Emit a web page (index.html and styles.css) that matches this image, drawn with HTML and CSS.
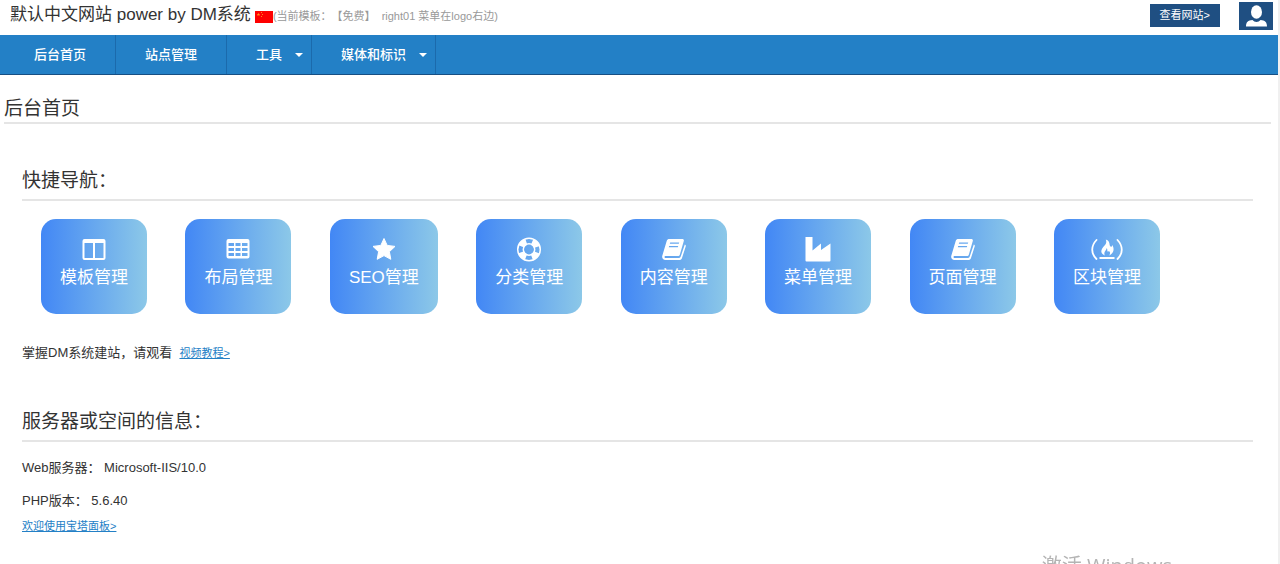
FILE: index.html
```html
<!DOCTYPE html>
<html lang="zh-CN">
<head>
<meta charset="utf-8">
<title>后台首页</title>
<link rel="stylesheet" href="styles.css">
</head>
<body>
<header class="topbar">
  <div class="site">
    <span class="site-name">默认中文网站 power by DM系统</span>
    <svg class="flag" viewBox="0 0 18 12" aria-hidden="true"><path fill="#fe0000" d="M0 0h18v12H0z"/><path fill="#ff9a1f" d="M3.400 1.800l.5 1.200h1.300l-1 .8.400 1.200-1.200-.7-1.100.7.400-1.200-1-.8H3z"/><path fill="#ff8a1f" d="M6 1h1v1H6zM7 3h1v1H7zM6 5h1v1H6z"/></svg>
    <span class="template">(当前模板：【免费】&nbsp; right01 菜单在logo右边)</span>
  </div>
  <div class="actions">
    <a class="view-site" href="#">查看网站&gt;</a>
    <button class="user" type="button" aria-label="用户">
      <svg viewBox="0 0 34 28" aria-hidden="true"><ellipse cx="17.500" cy="10" rx="5.500" ry="6.800" fill="#fff"/><path fill="#fff" d="M7 24.500c0-4.500 2-6 6.500-6.500 2 2.500 6 2.500 8 0 4.500.5 6.500 2 6.500 6.500z"/></svg>
    </button>
  </div>
</header>
<nav class="nav">
  <a class="nav-item nav-first" href="#">后台首页</a>
  <a class="nav-item" href="#">站点管理</a>
  <a class="nav-item nav-drop" href="#">工具<span class="caret"></span></a>
  <a class="nav-item nav-drop" href="#">媒体和标识<span class="caret"></span></a>
</nav>
<main class="main">
  <h1 class="page-title">后台首页</h1>
  <section class="section">
    <h2 class="section-title">快捷导航：</h2>
    <div class="cards">
      <a class="card" href="#"><svg class="icon" viewBox="0 0 32 24" aria-hidden="true"><path fill="#fff" fill-rule="evenodd" d="M6.500 2h19a2 2 0 0 1 2 2v17a2 2 0 0 1-2 2h-19a2 2 0 0 1-2-2V4a2 2 0 0 1 2-2zM6.500 6v15H15V6zM17 6v15h8.500V6z"/></svg><span>模板管理</span></a>
      <a class="card" href="#"><svg class="icon" viewBox="0 0 32 24" aria-hidden="true"><path fill="#fff" fill-rule="evenodd" d="M6.500 2h19a2 2 0 0 1 2 2v15.500a2 2 0 0 1-2 2h-19a2 2 0 0 1-2-2V4a2 2 0 0 1 2-2zM6.500 6v3H12V6zM13.500 6v3h5V6zM20 6v3h5.500V6zM6.500 11v3H12v-3zM13.500 11v3h5v-3zM20 11v3h5.500v-3zM6.500 16v3H12v-3zM13.500 16v3h5v-3zM20 16v3h5.500v-3z"/></svg><span>布局管理</span></a>
      <a class="card" href="#"><svg class="icon" viewBox="0 0 32 24" aria-hidden="true"><path fill="#fff" stroke="#fff" stroke-width="1" stroke-linejoin="round" d="M16 1.500l3.200 6.900 7.800 1-5.600 5.300 1.400 7.600-6.800-3.700-6.800 3.700 1.400-7.600L5 9.400l7.800-1z"/></svg><span>SEO管理</span></a>
      <a class="card" href="#"><svg class="icon" viewBox="0 0 32 24" aria-hidden="true"><circle cx="16" cy="12.500" r="11.300" fill="none" stroke="#fff" stroke-width="1.500"/><circle cx="16" cy="12.500" r="8.200" fill="none" stroke="#fff" stroke-width="6.200" stroke-dasharray="6.900 5.980" stroke-dashoffset="-2.990"/><circle cx="16" cy="12.500" r="5.700" fill="none" stroke="#fff" stroke-width="1.500"/></svg><span>分类管理</span></a>
      <a class="card" href="#"><svg class="icon" viewBox="0 0 32 24" aria-hidden="true"><path fill="#fff" fill-rule="evenodd" d="M11.500 2h12.800c1.200 0 1.800.9 1.500 2l-3.900 13.500c-.3 1-1 1.500-2 1.500H7.400c-1.200 0-1.200 1.900.2 1.900h13.500c.8 0 1.300-.5 1.600-1.300L26.800 7.500c1 .3 1.200 1.100.9 2.100L24 21c-.5 1.400-1.400 2-2.800 2H7.500c-2.500 0-3.800-2-3.200-4.200L8.700 4c.5-1.400 1.300-2 2.800-2zM12.200 5.500l-.4 1.300h9l.4-1.300zM11.200 9l-.4 1.300h9l.4-1.300z"/></svg><span>内容管理</span></a>
      <a class="card" href="#"><svg class="icon" viewBox="0 0 32 24" aria-hidden="true"><path fill="#fff" d="M4 0h6.500v13.500l8.500-7v6.500l9.500-6.500V23.500a1 1 0 0 1-1 1h-23a1 1 0 0 1-1-1V0z"/></svg><span>菜单管理</span></a>
      <a class="card" href="#"><svg class="icon" viewBox="0 0 32 24" aria-hidden="true"><path fill="#fff" fill-rule="evenodd" d="M11.500 2h12.800c1.200 0 1.800.9 1.500 2l-3.900 13.500c-.3 1-1 1.500-2 1.500H7.400c-1.200 0-1.200 1.900.2 1.900h13.500c.8 0 1.300-.5 1.600-1.300L26.800 7.500c1 .3 1.200 1.100.9 2.100L24 21c-.5 1.400-1.400 2-2.800 2H7.500c-2.500 0-3.800-2-3.200-4.200L8.700 4c.5-1.400 1.300-2 2.800-2zM12.200 5.500l-.4 1.300h9l.4-1.300zM11.200 9l-.4 1.300h9l.4-1.300z"/></svg><span>页面管理</span></a>
      <a class="card" href="#"><svg class="icon" viewBox="0 0 32 24" aria-hidden="true"><path fill="none" stroke="#fff" stroke-width="1.800" stroke-linecap="round" d="M5.500 3C-.2 9-.2 16.500 5.500 22M26.500 3c5.700 6 5.700 13.500 0 19"/><path fill="#fff" d="M8.500 20h15v2h-15z"/><path fill="#fff" fill-rule="evenodd" d="M14.800 2.500c5.500 2 2.500 6.200 5.200 7.200 1.300.2 1.200-1.200.9-2 2.800 3 2.300 8.500-2.700 10.800 1.300-2 1.200-3.800-.4-4.600-.3.700-.8.900-1.200.6-.7-.9.300-2.200-1-3.500-.1 2.600-3.300 3.500-1.800 7.500-6.500-3-2.300-8 0-10.300 1.600-1.700 1.900-3.600 1-5.700z"/></svg><span>区块管理</span></a>
    </div>
    <p class="guide">掌握DM系统建站，请观看&nbsp; <a class="link" href="#">视频教程&gt;</a></p>
  </section>
  <section class="section">
    <h2 class="section-title">服务器或空间的信息：</h2>
    <p class="info">Web服务器： Microsoft-IIS/10.0</p>
    <p class="info">PHP版本： 5.6.40</p>
    <a class="link" href="#">欢迎使用宝塔面板&gt;</a>
  </section>
</main>
<div class="watermark">激活 Windows</div>
</body>
</html>
```
FILE: styles.css
```css
* {
  box-sizing: border-box;
}

html {
  height: 100%;
  overflow: hidden;
}

body {
  min-height: 100%;
  margin: 0;
  border-right: 2px solid #f0f0f0;
  background: #fff;
  color: #333;
  font-family: "Liberation Sans", "Noto Sans CJK SC", sans-serif;
  font-size: 13px;
  line-height: 20px;
  text-spacing-trim: space-all;
}

h1,
h2,
p {
  margin: 0;
  font-weight: 400;
}

.topbar {
  display: flex;
  justify-content: space-between;
  height: 35px;
  padding: 2px 5px 0 10px;
}

.site {
  display: flex;
  align-items: flex-start;
}

.site-name {
  font-size: 17px;
  line-height: 26px;
}

.flag {
  width: 18px;
  height: 12px;
  margin: 9px 0 0 4px;
}

.template {
  padding-top: 4px;
  color: #999;
  font-size: 11px;
}

.actions {
  display: flex;
  align-items: flex-start;
  gap: 19px;
}

.view-site {
  margin-top: 2px;
  padding: 0 10px;
  background: #1f4f82;
  color: #fff;
  font-size: 11px;
  line-height: 23px;
  text-decoration: none;
}

.user {
  width: 34px;
  height: 28px;
  padding: 0;
  border: 0;
  background: #1f4f82;
}

.user svg {
  display: block;
}

.nav {
  display: flex;
  height: 40px;
  border-bottom: 1px solid #174f83;
  background: #2380c6;
}

.nav-item {
  display: flex;
  align-items: center;
  padding: 0 29px;
  border-right: 1px solid #1b6aac;
  color: #fff;
  font-size: 13px;
  font-weight: 500;
  text-decoration: none;
}

.nav-first {
  padding-left: 34px;
}

.nav-drop {
  gap: 13px;
  padding-right: 8px;
}

.caret {
  border: 4px solid transparent;
  border-top-color: #fff;
  border-bottom: 0;
}

.main {
  padding: 20px 7px 0 4px;
}

.page-title {
  border-bottom: 2px solid #e5e5e5;
  font-size: 19px;
  line-height: 27px;
}

.section {
  padding: 38px 18px 0;
}

.section-title {
  margin-bottom: 18px;
  border-bottom: 2px solid #e5e5e5;
  font-size: 19px;
  line-height: 37px;
}

.cards {
  display: flex;
  flex-wrap: wrap;
  justify-content: space-between;
  padding: 0 93px 0 19px;
}

.card {
  display: flex;
  flex-direction: column;
  align-items: center;
  height: 95px;
  padding: 18px 19px 0;
  border-radius: 15px;
  background: linear-gradient(to right, #4287f5, #8cc8e8);
  color: #fff;
  font-size: 17px;
  line-height: 34px;
  text-decoration: none;
}

.icon {
  width: 32px;
  height: 24px;
  overflow: visible;
}

.guide {
  margin: 29px 0 2px;
}

.link {
  color: #2380c6;
  font-size: 11px;
}

.info {
  margin-bottom: 17px;
  line-height: 16px;
}

.info + .link {
  display: block;
  margin-top: -10px;
}

.watermark {
  position: fixed;
  right: 108px;
  bottom: -16px;
  color: #b4b4b4;
  font-family: "Open Sans", "Noto Sans CJK SC", sans-serif;
  font-size: 20px;
  line-height: 28px;
}
```
